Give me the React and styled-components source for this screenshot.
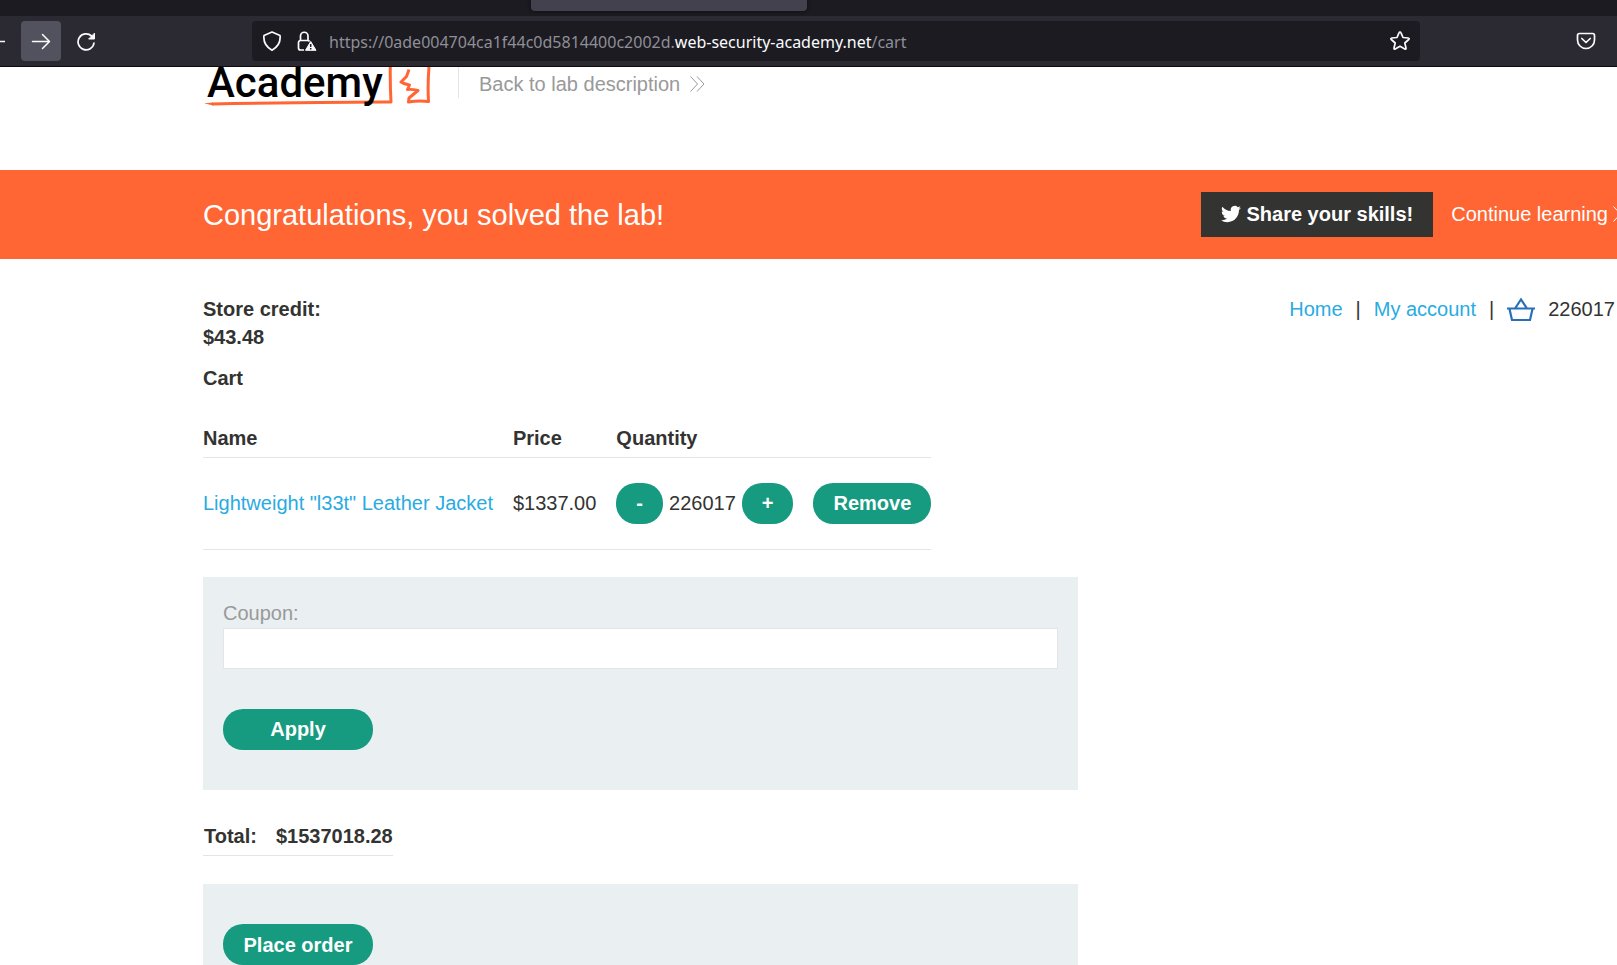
import React from "react";
import styled, { createGlobalStyle } from "styled-components";

const Global = createGlobalStyle`
  * { box-sizing: border-box; }
  body { margin: 0; }
  button, input { font: inherit; }
`;

const Window = styled.div`
  display: flex;
  flex-direction: column;
  height: 100vh;
  overflow: hidden;
  background: #fff;
  color: #333332;
  font: 20px/28px "Liberation Sans", Arial, sans-serif;
`;

const TabStrip = styled.div`
  display: flex;
  flex: none;
  height: 16px;
  padding-left: 531px;
  background: #1c1b22;
`;

const Tab = styled.div`
  width: 276px;
  height: 11px;
  border-radius: 0 0 4px 4px;
  background: #42414d;
  box-shadow: 0 0 4px #0c0b10;
`;

const Toolbar = styled.div`
  display: flex;
  flex: none;
  align-items: center;
  height: 51px;
  padding-right: 11px;
  border-bottom: 1px solid #0c0c0d;
  background: #2b2a33;
  color: #fbfbfe;
`;

const NavButtons = styled.div`
  display: flex;
  gap: 5px;
`;

const ToolButton = styled.button`
  display: flex;
  align-items: center;
  justify-content: ${(p) => (p.$clipped ? "flex-start" : "center")};
  flex: none;
  width: ${(p) => (p.$clipped ? 16 : 40)}px;
  height: 40px;
  padding: 0;
  border: 0;
  border-radius: 4px;
  background: ${(p) => (p.$active ? "#52525e" : "transparent")};
  color: inherit;
`;

const AddressBar = styled.div`
  display: flex;
  flex: 1;
  align-items: center;
  min-width: 0;
  height: 40px;
  margin: 0 146px;
  padding: 0 9px 0 10px;
  border-radius: 4px;
  background: #1c1b22;
`;

const BarIcon = styled.svg`
  flex: none;
  margin-right: ${(p) => p.$gap || 0}px;
`;

const Address = styled.div`
  flex: 1;
  overflow: hidden;
  padding-top: 2px;
  white-space: nowrap;
  color: #8f8f96;
  font: 16px/24px "Noto Sans", sans-serif;
`;

const Domain = styled.span`
  color: #fbfbfe;
`;

const Page = styled.div`
  flex: 1;
  min-height: 0;
  overflow: hidden;
`;

const Container = styled.div`
  display: flex;
  margin: 0 -11px 0 203px;
`;

const LabHeader = styled(Container)`
  align-items: flex-start;
  height: 103px;
`;

const BackLink = styled.a`
  display: flex;
  align-items: center;
  gap: 10px;
  height: 31px;
  margin-left: 25px;
  padding: 2px 0 0 20px;
  border-left: 1px solid #e4e4e4;
  color: #999;
  text-decoration: none;
`;

const Banner = styled.section`
  background: #ff6633;
  color: #fff;
`;

const BannerRow = styled(Container)`
  align-items: center;
  justify-content: space-between;
  height: 89px;
`;

const BannerTitle = styled.h4`
  margin: 0;
  font-size: 29px;
  font-weight: 400;
`;

const BannerActions = styled.div`
  display: flex;
  align-items: center;
  gap: 18px;
`;

const ShareButton = styled.button`
  display: flex;
  align-items: center;
  gap: 5px;
  height: 45px;
  padding: 0 20px 2px;
  border: 0;
  background: #333332;
  color: #fff;
  font-weight: 700;
`;

const ContinueLink = styled.a`
  display: flex;
  align-items: center;
  gap: 5px;
  padding-bottom: 2px;
  color: #fff;
  text-decoration: none;
`;

const StoreHeader = styled(Container)`
  align-items: flex-start;
  justify-content: space-between;
  padding-top: 36px;
`;

const Heading = styled.p`
  margin: 0;
  font-weight: 700;
`;

const Nav = styled.nav`
  display: flex;
  align-items: center;
  gap: 13px;
  padding-right: 13px;
`;

const Link = styled.a`
  color: #29abe2;
  text-decoration: none;
`;

const Cart = styled.main`
  max-width: 875px;
  margin: 13px 0 0 203px;
`;

const Items = styled.table`
  margin: 28px 0 27px;
  border-collapse: collapse;
`;

const Th = styled.th`
  height: 37px;
  padding: 0 20px 0 0;
  border-bottom: 1px solid #e4e4e4;
  text-align: left;
`;

const Td = styled.td`
  height: 92px;
  padding: 0 ${(p) => (p.$last ? 0 : 20)}px 0 0;
  border-bottom: 1px solid #e4e4e4;
  white-space: nowrap;
`;

const Quantity = styled.div`
  display: flex;
  align-items: center;
  gap: 6px;
`;

const Button = styled.button`
  height: 41px;
  min-width: ${(p) => (p.$wide ? 150 : 0)}px;
  padding: 0 20px;
  border: 0;
  border-radius: 20px;
  background: #169b80;
  color: #fff;
  font-weight: 700;
`;

const Panel = styled.form`
  padding: ${(p) => p.$top}px 20px 40px;
  background: #eaeff2;
`;

const Label = styled.label`
  display: block;
  color: #999;
`;

const TextInput = styled.input`
  display: block;
  width: 100%;
  height: 41px;
  margin: 1px 0 40px;
  padding: 0 10px;
  border: 1px solid #e4e4e4;
  background: #fff;
`;

const Totals = styled.table`
  margin: 28px 0;
  border-collapse: collapse;
`;

const TotalCell = styled.th`
  height: 38px;
  padding: ${(p) => (p.$last ? "0" : "0 19px 0 1px")};
  border-bottom: 1px solid #e4e4e4;
`;

const Chevrons = () => (
  <svg width="15" height="16" viewBox="0 0 15 16" fill="none" stroke="currentColor">
    <path d="M.5.5 7.5 8l-7 7.5M7 .5 14 8l-7 7.5" />
  </svg>
);

const Logo = () => (
  <svg width="230" height="42" viewBox="0 0 230 42" role="img" aria-label="Academy">
    <g fill="none" stroke="#ff6633" strokeWidth="3" strokeLinejoin="round">
      <path d="M187.300 0Q187 17 188 35L182 35Q95 35.500 9 37" />
      <path d="M206 2.500 203.500 9.500 198 15Q201 17 206.500 18L204.500 22.500Q209 22 215 23.500L206 31 205.500 35Q215 33.500 225.500 34.500Q224.500 17 226 0" />
    </g>
    <path d="M1 36.300 10 35.500V38.500Z" fill="#ff6633" />
    <text x="4" y="30" fontFamily="Roboto" fontWeight="500" fontSize="42">Academy</text>
  </svg>
);

export default function App() {
  return (
    <Window>
      <Global />
      <TabStrip><Tab /></TabStrip>
      <Toolbar>
        <NavButtons>
          <ToolButton $clipped aria-label="Back">
            <svg width="5" height="18" viewBox="0 0 5 18" stroke="currentColor" strokeWidth="1.500"><path d="M0 9.500h5" /></svg>
          </ToolButton>
          <ToolButton $active aria-label="Forward">
            <svg width="20" height="20" viewBox="0 0 20 20" fill="none" stroke="currentColor" strokeWidth="1.500" strokeLinecap="round" strokeLinejoin="round"><path d="M1.500 10.500h17M11.500 3.500l7 7-7 7" /></svg>
          </ToolButton>
          <ToolButton aria-label="Reload">
            <svg width="20" height="20" viewBox="0 0 20 20" fill="none" stroke="currentColor" strokeWidth="1.700" strokeLinecap="round"><path d="M15.500 5A8 8 0 1 0 18 12" /><path d="M18.500 2.500v5.500H13Z" fill="currentColor" strokeWidth="1" strokeLinejoin="round" /></svg>
          </ToolButton>
        </NavButtons>
        <AddressBar>
          <BarIcon $gap={15} width="20" height="20" viewBox="0 0 20 20" fill="none" stroke="currentColor" strokeWidth="1.700" strokeLinejoin="round">
            <path d="M10 1 18 4.500Q19.200 14 10 19.200Q.8 14 2 4.500Z" />
          </BarIcon>
          <BarIcon $gap={12} width="20" height="20" viewBox="0 0 20 20" fill="none" stroke="currentColor" strokeWidth="1.700">
            <path d="M7 19H3.500a2 2 0 0 1-2-2v-5.500a2 2 0 0 1 2-2h7a2 2 0 0 1 2 1M3.500 9.500V5a3.500 3.500 0 0 1 7.500 0v4.500" />
            <path d="M13.700 10.500 19 19.300H8.500Z" fill="currentColor" strokeWidth="1" strokeLinejoin="round" />
            <path d="M13.700 13v3M13.700 17v1.500" stroke="#1c1b22" strokeWidth="1.500" />
          </BarIcon>
          <Address>
            https://0ade004704ca1f44c0d5814400c2002d.<Domain>web-security-academy.net</Domain>/cart
          </Address>
          <BarIcon width="22" height="22" viewBox="0 0 22 22" fill="none" stroke="currentColor" strokeWidth="1.700" strokeLinejoin="round">
            <path d="M11 2q.7 0 1 .8l2 4.700 5.200.5q1.600.3.500 1.500l-3.900 3.500 1.200 5q.2 1.500-1.200.9L11 16.200l-4.800 2.700q-1.400.6-1.200-.9l1.200-5-3.900-3.500Q1.200 8.300 2.800 8L8 7.500l2-4.700Q10.300 2 11 2Z" />
          </BarIcon>
        </AddressBar>
        <ToolButton aria-label="Save to Pocket">
          <svg width="20" height="18" viewBox="0 0 20 18" fill="none" stroke="currentColor" strokeWidth="1.700" strokeLinecap="round" strokeLinejoin="round"><path d="M3.500 1.500h13q2 0 2 2V8a8.500 8.500 0 0 1-17 0V3.500q0-2 2-2ZM5.800 6.500l4.200 4 4.200-4" /></svg>
        </ToolButton>
      </Toolbar>
      <Page>
        <LabHeader as="header">
          <Logo />
          <BackLink href="#lab">Back to lab description <Chevrons /></BackLink>
        </LabHeader>
        <Banner>
          <BannerRow>
            <BannerTitle>Congratulations, you solved the lab!</BannerTitle>
            <BannerActions>
              <ShareButton>
                <svg width="20" height="20" viewBox="0 0 24 24" fill="currentColor"><path d="M23.950 4.570a10 10 0 0 1-2.820.77 4.960 4.960 0 0 0 2.160-2.720c-.95.550-2 .950-3.120 1.180a4.920 4.920 0 0 0-8.380 4.480C7.690 8.090 4.070 6.130 1.640 3.160a4.820 4.820 0 0 0-.67 2.480c0 1.710.87 3.210 2.190 4.100a4.900 4.900 0 0 1-2.230-.61v.06a4.920 4.920 0 0 0 3.950 4.830 5 5 0 0 1-2.210.08 4.940 4.940 0 0 0 4.600 3.420A9.870 9.870 0 0 1 0 19.540a13.990 13.990 0 0 0 7.550 2.210c9.050 0 14-7.500 14-13.980l-.02-.64a9.940 9.940 0 0 0 2.420-2.560Z" /></svg>
                Share your skills!
              </ShareButton>
              <ContinueLink href="#continue">Continue learning <Chevrons /></ContinueLink>
            </BannerActions>
          </BannerRow>
        </Banner>
        <StoreHeader as="header">
          <div>
            <Heading>Store credit:</Heading>
            <Heading>$43.48</Heading>
          </div>
          <Nav>
            <Link href="#home">Home</Link>
            <span>|</span>
            <Link href="#account">My account</Link>
            <span>|</span>
            <svg width="28" height="26" viewBox="0 0 28 26" fill="none" stroke="#286fb7" strokeWidth="2.200" role="img" aria-label="Basket">
              <path d="M0 12.500h28M2.500 13l2.500 11h18l2.500-11M8 12.500 14 3.500l6 9" />
            </svg>
            <span>226017</span>
          </Nav>
        </StoreHeader>
        <Cart>
          <Heading>Cart</Heading>
          <Items>
            <thead>
              <tr><Th>Name</Th><Th>Price</Th><Th>Quantity</Th><Th /></tr>
            </thead>
            <tbody>
              <tr>
                <Td><Link href="#product">Lightweight "l33t" Leather Jacket</Link></Td>
                <Td>$1337.00</Td>
                <Td>
                  <Quantity>
                    <Button>-</Button>
                    <span>226017</span>
                    <Button>+</Button>
                  </Quantity>
                </Td>
                <Td $last><Button>Remove</Button></Td>
              </tr>
            </tbody>
          </Items>
          <Panel $top={22}>
            <Label htmlFor="coupon">Coupon:</Label>
            <TextInput id="coupon" type="text" />
            <Button type="button" $wide>Apply</Button>
          </Panel>
          <Totals>
            <tbody>
              <tr><TotalCell>Total:</TotalCell><TotalCell $last>$1537018.28</TotalCell></tr>
            </tbody>
          </Totals>
          <Panel $top={40}>
            <Button type="button" $wide>Place order</Button>
          </Panel>
        </Cart>
      </Page>
    </Window>
  );
}
